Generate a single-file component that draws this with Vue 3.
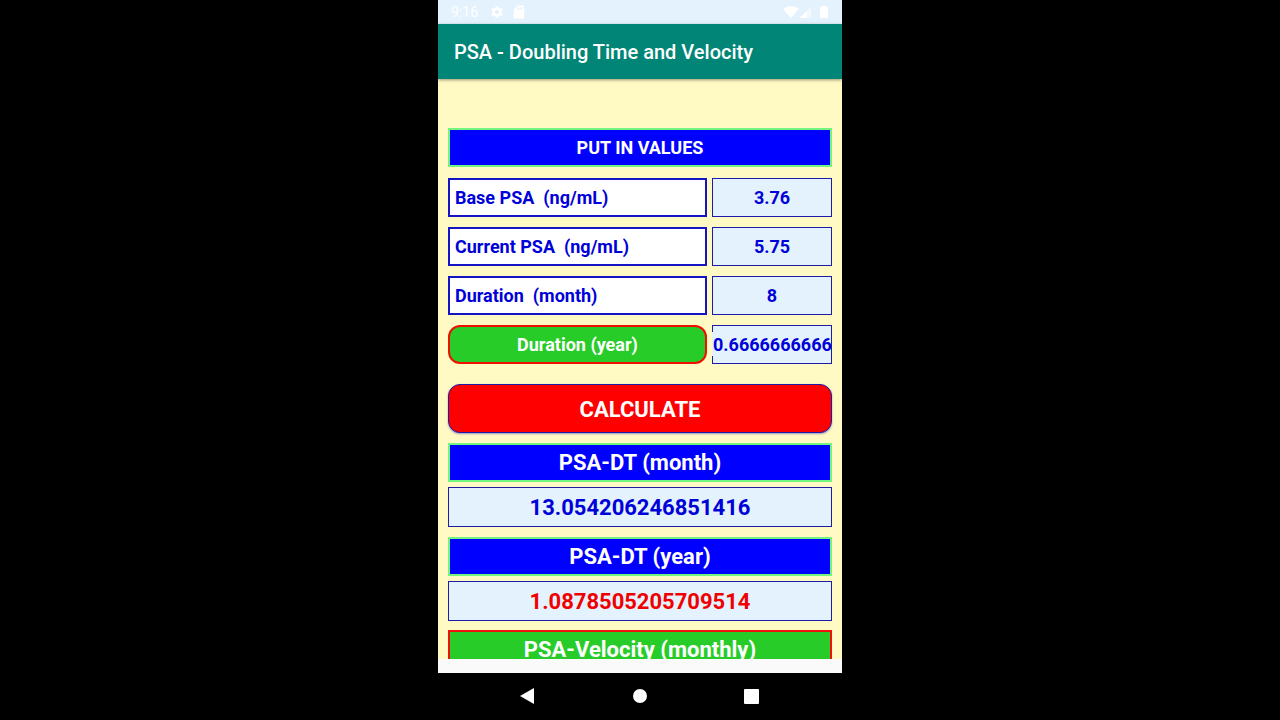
<script setup>
import { ref } from 'vue'

const base = ref('3.76')
const current = ref('5.75')
const months = ref('8')
const years = ref('0.6666666666666666')
const doublingMonths = ref('13.054206246851416')
const doublingYears = ref('1.0878505205709514')

function convertDuration() {
  years.value = String(Number(months.value) / 12)
}

function calculate() {
  convertDuration()
  const growth = Math.log(Number(current.value) / Number(base.value))
  const result = (Number(months.value) * Math.LN2) / growth
  doublingMonths.value = String(result)
  doublingYears.value = String(result / 12)
}
</script>

<template>
  <div class="phone">
    <div class="status">
      <span class="clock">9:16</span>
      <svg class="gear" width="14" height="14" viewBox="0 0 24 24" fill="#fff" aria-hidden="true">
        <path d="M19.4 13c.04-.3.1-.65.1-1s-.03-.68-.08-1l2.1-1.65c.2-.15.25-.42.13-.64l-2-3.46c-.12-.22-.38-.3-.6-.22l-2.5 1c-.52-.4-1.08-.73-1.69-.98l-.38-2.65A.5.5 0 0 0 14 2h-4a.5.5 0 0 0-.49.42l-.38 2.65c-.61.25-1.17.59-1.69.98l-2.49-1c-.23-.09-.49 0-.61.22l-2 3.46c-.12.22-.07.49.12.64L4.57 11c-.04.32-.07.66-.07 1s.03.68.07 1l-2.11 1.65c-.19.15-.24.42-.12.64l2 3.46c.12.22.38.3.61.22l2.49-1c.52.4 1.08.73 1.69.98l.38 2.65c.03.24.24.42.49.42h4c.25 0 .46-.18.49-.42l.38-2.65c.61-.25 1.17-.59 1.69-.98l2.49 1c.23.09.49 0 .61-.22l2-3.46c.12-.22.07-.49-.12-.64zM12 15.5a3.5 3.5 0 1 1 0-7 3.5 3.5 0 0 1 0 7z" />
      </svg>
      <svg class="card" width="14" height="14" viewBox="0 0 24 24" fill="#fff" aria-hidden="true">
        <path d="M19 1h-9L3 8v13c0 1.100.9 2 2 2h14c1.100 0 2-.9 2-2V3c0-1.100-.9-2-2-2zm-7 7h-2V4h2zm3 0h-2V4h2zm3 0h-2V4h2z" />
      </svg>
      <svg class="signals" width="46" height="14" viewBox="0 0 46 14" fill="#fff" aria-hidden="true">
        <path d="M0 4Q8-2 16 4L8 13z" />
        <path d="M17 13 28 2V13z" opacity=".5" />
        <path d="M17 13 24 6V13z" />
        <path d="M37 2h2V1h4v1h2v11h-8z" />
      </svg>
    </div>

    <header class="app-bar"><h1>PSA - Doubling Time and Velocity</h1></header>

    <main class="content">
      <form class="form" @submit.prevent="calculate">
        <h2 class="banner small">PUT IN VALUES</h2>
        <div class="row">
          <label class="name" for="base">Base PSA&nbsp; (ng/mL)</label>
          <input id="base" v-model="base" class="value" type="text" inputmode="decimal">
        </div>
        <div class="row">
          <label class="name" for="current">Current PSA&nbsp; (ng/mL)</label>
          <input id="current" v-model="current" class="value" type="text" inputmode="decimal">
        </div>
        <div class="row">
          <label class="name" for="months">Duration&nbsp; (month)</label>
          <input id="months" v-model="months" class="value" type="text" inputmode="decimal">
        </div>
        <div class="row">
          <button class="convert" type="button" @click="convertDuration">Duration (year)</button>
          <div class="long">
            <input v-model="years" class="value" type="text" readonly aria-label="Duration (year)">
          </div>
        </div>
        <button class="calculate" type="submit">CALCULATE</button>
      </form>

      <label class="banner" for="dt-month">PSA-DT (month)</label>
      <input id="dt-month" v-model="doublingMonths" class="value result" type="text" readonly>
      <label class="banner" for="dt-year">PSA-DT (year)</label>
      <input id="dt-year" v-model="doublingYears" class="value result red" type="text" readonly>
      <h2 class="banner green">PSA-Velocity (monthly)</h2>
    </main>

    <nav class="nav">
      <button type="button" aria-label="Back">
        <svg width="16" height="16" viewBox="0 0 16 16"><path d="M14 0V16L0 8z" fill="#fff" /></svg>
      </button>
      <button type="button" aria-label="Home">
        <svg width="16" height="16" viewBox="0 0 16 16"><circle cx="8" cy="8" r="7" fill="#fff" /></svg>
      </button>
      <button type="button" aria-label="Recent apps">
        <svg width="16" height="16" viewBox="0 0 16 16"><rect x="0" y="1" width="15" height="15" rx="1" fill="#fff" /></svg>
      </button>
    </nav>
  </div>
</template>

<style>
body {
  background: #000;
}
</style>

<style scoped>
.phone,
.phone * {
  box-sizing: border-box;
}

.phone {
  display: flex;
  flex-direction: column;
  max-width: 404px;
  height: 100vh;
  margin: 0 auto;
  background: #fafafa;
  font-family: Roboto, "Liberation Sans", sans-serif;
}

button,
input {
  margin: 0;
  font-family: inherit;
}

.status {
  display: flex;
  flex: none;
  align-items: center;
  height: 24px;
  padding: 0 13px;
  background: #e3f2fd;
  color: #fff;
}

.clock {
  font-size: 14px;
}

.gear {
  margin-left: 12px;
}

.card {
  margin-left: 8px;
}

.signals {
  margin-left: auto;
}

.app-bar {
  position: relative;
  display: flex;
  flex: none;
  align-items: center;
  height: 55px;
  padding: 0 16px;
  background: #008577;
  box-shadow: 0 1px 3px rgba(0, 0, 0, 0.4);
}

h1 {
  margin: 0;
  color: #fff;
  font-size: 20px;
  font-weight: 500;
}

.content {
  display: flex;
  flex: 1;
  flex-direction: column;
  min-height: 0;
  margin-bottom: 14px;
  padding: 49px 10px 0;
  overflow: hidden;
  background: #fff9c4;
}

.form {
  display: flex;
  flex: none;
  flex-direction: column;
  gap: 10px;
  margin-bottom: 10px;
}

.banner {
  display: flex;
  flex: none;
  align-items: center;
  justify-content: center;
  height: 39px;
  margin: 0 0 5px;
  border: 2px solid #72f580;
  background: #00f;
  color: #fff;
  font-size: 22px;
  font-weight: 700;
}

.banner.small {
  margin-bottom: 1px;
  font-size: 18px;
}

.banner.green {
  border-color: #f01010;
  background: #28cc28;
}

.row {
  display: grid;
  grid-template-columns: 1fr 120px;
  gap: 5px;
  height: 39px;
}

.name {
  display: flex;
  align-items: center;
  padding: 0 5px;
  border: 2px solid #1414c4;
  background: #fff;
  color: #0000d8;
  font-size: 18px;
  font-weight: 700;
}

.value {
  width: 100%;
  height: 39px;
  padding: 0;
  border: 1px solid #1c1ca8;
  border-radius: 0;
  outline: 0;
  background: #e3f2fd;
  color: #0000d8;
  font-size: 18px;
  font-weight: 700;
  text-align: center;
}

.long {
  position: relative;
}

.long::before {
  position: absolute;
  top: 7px;
  bottom: 8px;
  left: 0;
  width: 1px;
  background: #e3f2fd;
  content: "";
}

.result {
  flex: none;
  height: 40px;
  margin-bottom: 10px;
  font-size: 22px;
}

.result.red {
  margin-bottom: 9px;
  color: #f00000;
}

.convert {
  padding: 0;
  border: 2px solid #ee1000;
  border-radius: 12px;
  background: #28cc28;
  color: #fff;
  font-size: 18px;
  font-weight: 700;
}

.calculate {
  height: 49px;
  margin-top: 10px;
  padding: 2px 0 0;
  border: 1px solid #1c1ca8;
  border-radius: 12px;
  background: #f00;
  box-shadow: 0 1px 2px rgba(0, 0, 180, 0.4);
  color: #fff;
  font-size: 22px;
  font-weight: 700;
}

.nav {
  display: flex;
  flex: none;
  align-items: center;
  justify-content: center;
  gap: 80px;
  height: 47px;
  padding-bottom: 1px;
  background: #000;
}

.nav button {
  display: flex;
  justify-content: center;
  width: 32px;
  padding: 8px;
  border: 0;
  background: none;
}
</style>
